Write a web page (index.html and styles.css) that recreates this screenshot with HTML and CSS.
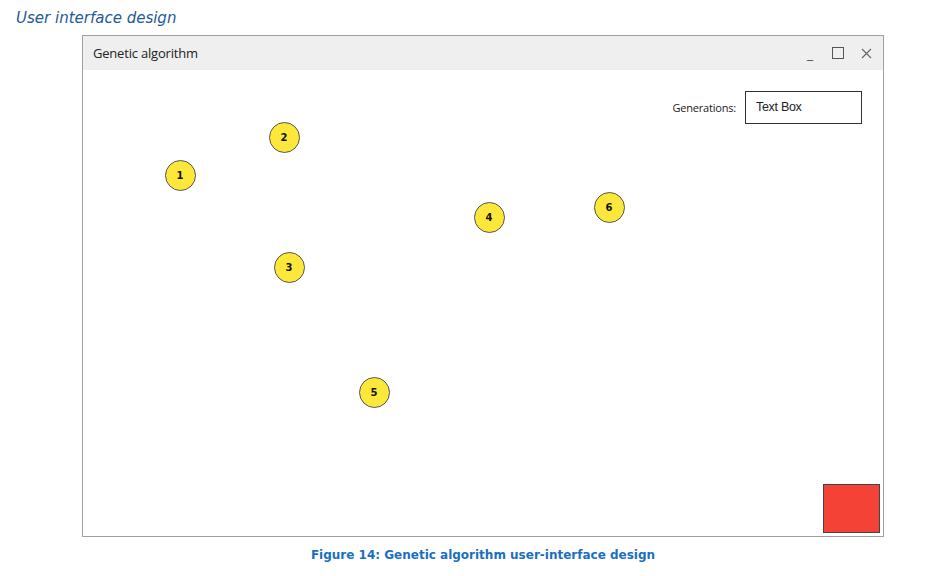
FILE: index.html
```html
<!DOCTYPE html>
<html>
<head>
<meta charset="utf-8">
<link rel="stylesheet" href="styles.css">
</head>
<body>
<h2 class="heading">User interface design</h2>
<div class="figure">
  <div class="window">
    <div class="titlebar">
      <span class="title">Genetic algorithm</span>
      <div class="controls">
        <span class="ctl min">_</span>
        <span class="ctl max"><svg width="12" height="12" viewBox="0 0 12 12"><rect x="0.5" y="0.5" width="11" height="11" fill="none" stroke="#555" stroke-width="1"/></svg></span>
        <span class="ctl close"><svg width="11" height="11" viewBox="0 0 11 11"><path d="M1 1L10 10M10 1L1 10" stroke="#666" stroke-width="1.1"/></svg></span>
      </div>
    </div>
    <div class="canvas">
      <div class="toolbar">
        <label class="label">Generations:</label>
        <div class="textbox">Text Box</div>
      </div>
      <div class="node" style="left:97px;top:105px">1</div>
      <div class="node" style="left:201px;top:67px">2</div>
      <div class="node" style="left:206px;top:197px">3</div>
      <div class="node" style="left:406px;top:147px">4</div>
      <div class="node" style="left:291px;top:322px">5</div>
      <div class="node" style="left:526px;top:137px">6</div>
      <div class="footer">
        <div class="redbox"></div>
      </div>
    </div>
  </div>
  <div class="caption">Figure 14: Genetic algorithm user-interface design</div>
</div>
</body>
</html>
```
FILE: styles.css
```css
html, body {
  margin: 0;
  padding: 0;
  background: #fff;
}
body {
  width: 928px;
  height: 576px;
  overflow: hidden;
}
.heading {
  margin: 0;
  padding: 9px 0 0 16px;
  height: 35px;
  font-family: "DejaVu Sans", sans-serif;
  font-style: italic;
  font-weight: normal;
  font-size: 15px;
  line-height: 19px;
  color: #245a96;
  box-sizing: border-box;
}
.figure {
  width: 802px;
  margin-left: 82px;
}
.window {
  width: 802px;
  height: 502px;
  border: 1px solid #a0a0a0;
  box-sizing: border-box;
  display: flex;
  flex-direction: column;
}
.titlebar {
  height: 34px;
  background: #efefef;
  display: flex;
  align-items: center;
  justify-content: space-between;
  padding: 0 11px 0 10px;
  flex-shrink: 0;
}
.title {
  font-family: "Open Sans", "Noto Sans", sans-serif;
  font-size: 13px;
  color: #222;
  letter-spacing: -0.2px;
}
.controls {
  display: flex;
  align-items: center;
  gap: 16px;
}
.ctl {
  width: 12px;
  height: 12px;
  display: flex;
  align-items: center;
  justify-content: center;
}
.min {
  font-family: "DejaVu Sans", sans-serif;
  font-size: 12px;
  color: #555;
  line-height: 12px;
  align-items: flex-end;
  padding-top: 2px;
}
.canvas {
  position: relative;
  flex: 1;
  display: flex;
  flex-direction: column;
  background: #fff;
}
.toolbar {
  display: flex;
  justify-content: flex-end;
  align-items: center;
  gap: 9px;
  padding: 21px 21px 0 0;
}
.label {
  font-family: "Open Sans", "Noto Sans", sans-serif;
  font-size: 11px;
  color: #222;
  letter-spacing: -0.2px;
}
.textbox {
  width: 117px;
  height: 33px;
  border: 1px solid #333;
  box-sizing: border-box;
  font-family: "Liberation Sans", Arial, sans-serif;
  font-size: 12.5px;
  color: #222;
  padding-left: 10px;
  line-height: 31px;
  letter-spacing: -0.3px;
}
.node {
  position: absolute;
  width: 31px;
  height: 31px;
  margin: -15.5px 0 0 -15.5px;
  border-radius: 50%;
  background: #fde73a;
  border: 1.5px solid #555;
  box-sizing: border-box;
  display: flex;
  align-items: center;
  justify-content: center;
  font-family: "DejaVu Sans", sans-serif;
  font-weight: bold;
  font-size: 10px;
  color: #111;
}
.footer {
  margin-top: auto;
  display: flex;
  justify-content: flex-end;
  padding: 0 3px 3px 0;
}
.redbox {
  width: 57px;
  height: 49px;
  background: #f44336;
  border: 1px solid #444;
  box-sizing: border-box;
}
.caption {
  text-align: center;
  font-family: "DejaVu Sans", sans-serif;
  font-weight: bold;
  font-size: 12px;
  color: #1a6fc4;
  margin-top: 11px;
  line-height: 14px;
}
```
